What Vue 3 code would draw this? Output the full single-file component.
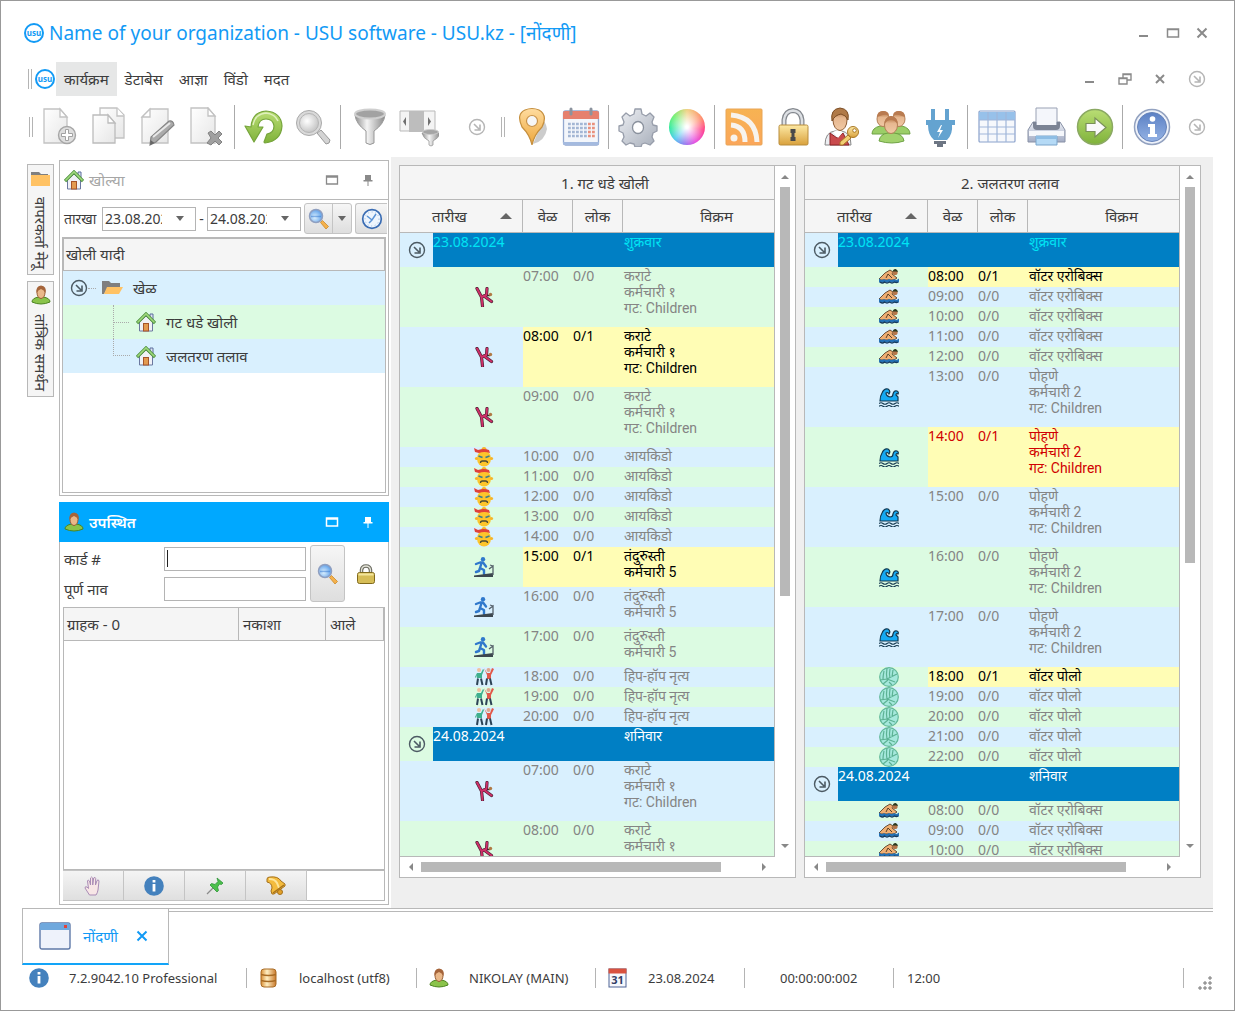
<template>
  <div class="window">
    <svg class="sprite" width="0" height="0" aria-hidden="true">
      <defs>
        <linearGradient id="g-paper" x1="0" y1="0" x2="1" y2="1">
          <stop offset="0" stop-color="#ffffff" />
          <stop offset="1" stop-color="#e6e6e6" />
        </linearGradient>
        <linearGradient id="g-metal" x1="0" y1="0" x2="1" y2="0">
          <stop offset="0" stop-color="#8f8f8f" />
          <stop offset="0.4" stop-color="#f4f4f4" />
          <stop offset="1" stop-color="#8a8a8a" />
        </linearGradient>
        <linearGradient id="g-green" x1="0" y1="0" x2="0" y2="1">
          <stop offset="0" stop-color="#b9dd74" />
          <stop offset="1" stop-color="#7fb23a" />
        </linearGradient>
        <linearGradient id="g-orange" x1="0" y1="0" x2="0" y2="1">
          <stop offset="0" stop-color="#ffdca0" />
          <stop offset="1" stop-color="#eda63a" />
        </linearGradient>
        <linearGradient id="g-gear" x1="0" y1="0" x2="1" y2="1">
          <stop offset="0" stop-color="#eef0f4" />
          <stop offset="1" stop-color="#a6adb9" />
        </linearGradient>
        <linearGradient id="g-rss" x1="0" y1="0" x2="0" y2="1">
          <stop offset="0" stop-color="#f7b352" />
          <stop offset="1" stop-color="#fba65a" />
        </linearGradient>
        <linearGradient id="g-gold" x1="0" y1="0" x2="0" y2="1">
          <stop offset="0" stop-color="#fde9a4" />
          <stop offset="1" stop-color="#d9a13c" />
        </linearGradient>
        <linearGradient id="g-skin" x1="0" y1="0" x2="0" y2="1">
          <stop offset="0" stop-color="#a5622f" />
          <stop offset="0.4" stop-color="#e6b78f" />
          <stop offset="1" stop-color="#f1c9a5" />
        </linearGradient>
        <linearGradient id="g-info" x1="0" y1="0" x2="0" y2="1">
          <stop offset="0" stop-color="#5b80c4" />
          <stop offset="1" stop-color="#94b2e4" />
        </linearGradient>
        <linearGradient id="g-print" x1="0" y1="0" x2="0" y2="1">
          <stop offset="0" stop-color="#eceff6" />
          <stop offset="1" stop-color="#a3acc4" />
        </linearGradient>
        <linearGradient id="g-db" x1="0" y1="0" x2="1" y2="0">
          <stop offset="0" stop-color="#d98e35" />
          <stop offset="0.4" stop-color="#fff0c4" />
          <stop offset="1" stop-color="#c9782a" />
        </linearGradient>
        <radialGradient id="g-lens" cx="0.4" cy="0.6" r="0.7">
          <stop offset="0" stop-color="#e0f3ff" />
          <stop offset="1" stop-color="#4a93e6" />
        </radialGradient>
        <radialGradient id="g-glass" cx="0.4" cy="0.4" r="0.7">
          <stop offset="0" stop-color="#ffffff" />
          <stop offset="1" stop-color="#bdbdbd" />
        </radialGradient>
      </defs>

      <symbol id="i-chevron" viewBox="0 0 18 18">
        <circle cx="9" cy="9" r="7.500" fill="none" stroke="currentColor" stroke-width="1.400" />
        <path d="M6 6l5 5M12 6.500v5.500h-5.500" fill="none" stroke="currentColor" stroke-width="1.600" />
      </symbol>

      <!-- main toolbar -->
      <symbol id="i-new" viewBox="0 0 40 40">
        <path d="M4 2h16l7 8v26H4z" fill="url(#g-paper)" stroke="#c2c2c2" stroke-width="1.300" />
        <path d="M20 2v8h7z" fill="#fff" stroke="#c2c2c2" stroke-width="1.300" />
        <circle cx="27" cy="28" r="8.500" fill="#dedede" stroke="#a6a6a6" stroke-width="1.400" />
        <path d="M25.500 22.500h3v4h4v3h-4v4h-3v-4h-4v-3h4z" fill="#fff" stroke="#a2a2a2" />
      </symbol>
      <symbol id="i-copy" viewBox="0 0 40 40">
        <path d="M11 1h17l7 7v23H11z" fill="url(#g-paper)" stroke="#c2c2c2" stroke-width="1.300" />
        <path d="M28 1v8h7" fill="#fff" stroke="#c2c2c2" stroke-width="1.300" />
        <path d="M4 8h15l7 8v20H4z" fill="url(#g-paper)" stroke="#bcbcbc" stroke-width="1.300" />
        <path d="M19 8v8h7z" fill="#fff" stroke="#bcbcbc" stroke-width="1.300" />
      </symbol>
      <symbol id="i-edit" viewBox="0 0 40 40">
        <path d="M12 2h18v34H4V10z" fill="url(#g-paper)" stroke="#c2c2c2" stroke-width="1.300" />
        <path d="M12 2v8H4z" fill="#fff" stroke="#c2c2c2" stroke-width="1.300" />
        <path d="M12 38l1-8L31 14q4-1 5 4L18 35z" fill="#aaa" stroke="#858585" stroke-width="1.200" />
        <path d="M15 30l17-14" stroke="#e8e8e8" stroke-width="2" />
        <path d="M12 38l.5-5 4 3z" fill="#666" />
      </symbol>
      <symbol id="i-delete" viewBox="0 0 40 40">
        <path d="M4 1h17l7 8v27H4z" fill="url(#g-paper)" stroke="#c2c2c2" stroke-width="1.300" />
        <path d="M21 1v8h7z" fill="#fff" stroke="#c2c2c2" stroke-width="1.300" />
        <path d="M21 26l3-2 4 4 4-4 3 3-4 4 4 4-3 3-4-4-4 4-4-2 4-5z" fill="#a0a0a0" stroke="#828282" />
      </symbol>
      <symbol id="i-refresh" viewBox="0 0 40 40">
        <path d="M7 20Q8 5 22 4q15 1 16 15-1 15-17 17l-1-1 3-8q7-1 7-8-1-7-8-7-7 0-8 8h5L10 35 1 19z" fill="url(#g-green)" stroke="#76a53c" stroke-width="1.200" stroke-linejoin="round" />
        <path d="M9 18Q11 7 22 6q9 1 12 8" fill="none" stroke="#dff0bd" stroke-width="1.500" />
      </symbol>
      <symbol id="i-search" viewBox="0 0 40 40">
        <path d="M24 26l4-3 9 10q0 4-4 4z" fill="#d4d4d4" stroke="#999" />
        <circle cx="16" cy="16" r="12.500" fill="#d9d9d9" stroke="#a9a9a9" />
        <circle cx="16" cy="16" r="9.500" fill="url(#g-glass)" stroke="#b5b5b5" />
      </symbol>
      <symbol id="i-filter" viewBox="0 0 40 40">
        <path d="M5 8q1 9 11 16v12q4 3 8 0V24Q34 17 35 8z" fill="url(#g-metal)" stroke="#989898" />
        <ellipse cx="20" cy="7" rx="15" ry="4.500" fill="#a2a2a2" stroke="#cfcfcf" stroke-width="2" />
      </symbol>
      <symbol id="i-filtercols" viewBox="0 0 40 40">
        <path d="M1 4h35v20H1z" fill="#f4f4f4" stroke="#b9b9b9" />
        <path d="M10 4h15v21H10z" fill="#bdbdbd" />
        <path d="M7 10v9l-3-4.500zM29 10v9l3-4.500z" fill="#707070" />
        <path d="M23 26q1 5 7 8v4q2 2 4 0v-4q6-3 7-8z" fill="url(#g-metal)" stroke="#999" stroke-width="0.800" />
        <ellipse cx="31.500" cy="25" rx="8" ry="2.500" fill="#a5a5a5" stroke="#ccc" />
      </symbol>
      <symbol id="i-pin" viewBox="0 0 40 40">
        <path d="M21 37q12-3 14-15-1-6-4-9z" fill="#000" opacity="0.200" />
        <path d="M20 38Q18 28 10 20 4 7 13 3q7-3 14 0 9 5 3 17-8 8-10 18z" fill="url(#g-orange)" stroke="#c58f3e" stroke-width="1.200" />
        <circle cx="20" cy="14" r="5.500" fill="#f6f6f6" stroke="#c8924a" stroke-width="1.200" />
      </symbol>
      <symbol id="i-calendar" viewBox="0 0 40 40">
        <rect x="2.500" y="4" width="35" height="34" rx="2" fill="#f3f6fb" stroke="#93a8cf" stroke-width="1.300" />
        <path d="M2 6q0-2 2-2h32q2 0 2 2v6H2z" fill="#e6806e" />
        <path d="M2 35h36v2q0 1-2 1H4q-2 0-2-1z" fill="#a4badf" />
        <path d="M10 2v5M30 2v5" stroke="#8b939e" stroke-width="3" stroke-linecap="round" />
        <path d="M7 17h19M7 21h19M7 25h19M7 29h19" stroke="#a3b6d4" stroke-width="2.600" stroke-dasharray="2.800 1.200" />
        <path d="M27 17h7M27 21h7M27 25h7M27 29h7" stroke="#e9917e" stroke-width="2.600" stroke-dasharray="2.800 1.200" />
      </symbol>
      <symbol id="i-gear" viewBox="0 0 40 40">
        <path d="M17 2h6l1 5 4 2 4-3 4 4-2 5 1 3 4 1v5l-4 2-1 4 2 4-4 4-5-2-3 1-1 3h-6l-1-3-4-1-4 2-4-4 2-4-1-4-4-2v-5l4-1 1-3-2-5 4-4 4 3 4-2z" fill="url(#g-gear)" stroke="#979daa" stroke-width="1.300" stroke-linejoin="round" />
        <ellipse cx="20" cy="20.500" rx="5.500" ry="6" fill="#fff" stroke="#8a919d" stroke-width="1.300" />
      </symbol>
      <symbol id="i-rss" viewBox="0 0 40 40">
        <rect x="2" y="2" width="36" height="36" rx="1" fill="url(#g-rss)" stroke="#e9a556" />
        <path d="M7 18q14 1 14 17M7 8q25 2 26 27" fill="none" stroke="#f7f3ee" stroke-width="5" />
        <circle cx="10" cy="31" r="3.500" fill="#f7f3ee" />
      </symbol>
      <symbol id="i-lock" viewBox="0 0 40 40">
        <path d="M11 20v-7q1-9 9-9.500 8 .5 9 9.500v7" fill="none" stroke="#85898f" stroke-width="5" />
        <path d="M11 20v-7q1-9 9-9.500 8 .5 9 9.500v7" fill="none" stroke="#dde0e4" stroke-width="2.500" />
        <rect x="6" y="18" width="29" height="20" rx="1.500" fill="url(#g-gold)" stroke="#b98d3d" />
        <path d="M17.500 22h5v4h-1v4h1v4h-5v-4h1v-4h-1z" fill="#4a4a4a" />
      </symbol>
      <symbol id="i-userkey" viewBox="0 0 40 40">
        <path d="M3 38q0-13 10-14h6q10 1 10 14z" fill="#eceef2" stroke="#888" />
        <path d="M8 38V26l7 5 6-5 6 12z" fill="#c94a4d" stroke="#8d2226" />
        <path d="M11 25l5 6 5-6-5-2z" fill="#fff" />
        <ellipse cx="18" cy="13" rx="7" ry="10.500" fill="url(#g-skin)" stroke="#8d5b33" />
        <path d="M10 14Q8 2 18 1q10 1 8 12-2-5-7-6-6 1-9 7z" fill="#b07a48" stroke="#7c4d24" />
        <circle cx="31" cy="25" r="5.500" fill="url(#g-gold)" stroke="#a97825" />
        <circle cx="32.500" cy="23.500" r="1.800" fill="#fff" stroke="#a97825" />
        <path d="M26 28l3 3-8 7h-3v-3z" fill="#f2cf73" stroke="#a97825" />
      </symbol>
      <symbol id="i-group" viewBox="0 0 40 40">
        <path d="M1 27q0-6 8-8h5l5 8zM39 27q0-6-8-8h-5l-5 8z" fill="#9bce68" stroke="#6ea244" />
        <ellipse cx="12" cy="12" rx="6" ry="7.500" fill="url(#g-skin)" stroke="#b37f56" />
        <ellipse cx="28" cy="12" rx="6" ry="7.500" fill="url(#g-skin)" stroke="#b37f56" />
        <path d="M6 10q0-6 6-6t6 5q-3-2-6-1t-6 2zM22 9q0-5 6-5t6 6q-3-1-6-2t-6 1z" fill="#b97b50" />
        <path d="M8 34q1-7 9-8h6q9 1 10 8-12 4-25 0z" fill="#a2d26d" stroke="#6ea244" />
        <ellipse cx="20" cy="18" rx="6.500" ry="8.500" fill="url(#g-skin)" stroke="#b37f56" />
        <path d="M13.500 17q0-7 6.500-8 7 1 6.500 8-3-4-6.500-4-4 0-6.500 4z" fill="#b97b50" />
      </symbol>
      <symbol id="i-plug" viewBox="0 0 40 40">
        <path d="M11 2h4v11h-4zM25 2h4v11h-4zM6 13h29v5h-3q1 9-5 15H14Q8 28 8 18H6z" fill="#64a3d0" />
        <path d="M14 34h12v3h-3v3h-6v-3h-3z" fill="#6d7683" />
        <path d="M21 18l-4 7h3l-2 6 5-8h-3l2-5z" fill="#fff" />
      </symbol>
      <symbol id="i-table" viewBox="0 0 40 40">
        <rect x="2" y="4" width="36" height="31" rx="1" fill="#f6f8fc" stroke="#8aa1cb" stroke-width="1.200" />
        <path d="M2 5h36v8H2z" fill="#97c1ea" />
        <path d="M2 13h36M2 20h36M2 27h36M11 5v30M20 5v30M29 5v30" stroke="#a0b6d9" stroke-width="1.200" />
      </symbol>
      <symbol id="i-printer" viewBox="0 0 40 40">
        <path d="M10 1h21v19H10z" fill="#f4f6fb" stroke="#99a1b4" />
        <path d="M2 23l5-8h3v4h21v-4h3l5 8v12H2z" fill="url(#g-print)" stroke="#8790a5" />
        <path d="M7 15h3v3h21v-3h3v4q0 4-4 4H11q-4 0-4-4z" fill="#7b8394" />
        <path d="M3 24h35v5H3z" fill="#f5f7fb" />
        <path d="M10 29h21v9H10z" fill="#b5daf6" stroke="#7aa5cb" />
        <path d="M10 29h21v3H10z" fill="#8ebde4" />
      </symbol>
      <symbol id="i-next" viewBox="0 0 40 40">
        <circle cx="20" cy="20" r="17.500" fill="url(#g-green)" stroke="#8ba963" stroke-width="1.500" />
        <path d="M11 16.500h9V11l11 9.500L20 30v-5.500h-9z" fill="#fafafa" stroke="#7a9058" stroke-width="1.200" />
      </symbol>
      <symbol id="i-about" viewBox="0 0 40 40">
        <circle cx="20" cy="20" r="17.500" fill="#eef2fa" stroke="#93a2c0" stroke-width="1.500" />
        <circle cx="20" cy="20" r="14.500" fill="url(#g-info)" stroke="#6683b9" />
        <circle cx="20.500" cy="12" r="2.800" fill="#fff" />
        <path d="M16 17h7v10h2v3h-9v-3h2v-7h-2z" fill="#fff" />
      </symbol>

      <!-- small icons -->
      <symbol id="i-home" viewBox="0 0 20 20">
        <path d="M14 2h3v6h-3z" fill="#dfe5f2" stroke="#5b6d9c" />
        <path d="M3.500 9.500L10 4l6.500 5.500V19h-13z" fill="#f0f1f6" stroke="#6b789f" />
        <rect x="7.500" y="11.500" width="5" height="7.500" fill="#e39a50" stroke="#a4532a" />
        <path d="M1 11l9-9 9 9" fill="none" stroke="#4b8f3c" stroke-width="3.200" />
        <path d="M1.500 10.500L10 2l8.500 8.500" fill="none" stroke="#a0d97c" stroke-width="1.600" />
      </symbol>
      <symbol id="i-folder" viewBox="0 0 20 16">
        <path d="M0 2h8l2 2h7v4H0z" fill="#7f7f7f" />
        <path d="M0 5h19v11H0z" fill="#ffc264" />
      </symbol>
      <symbol id="i-openfolder" viewBox="0 0 22 16">
        <path d="M0 1h7l2 2h9v4H6L2 14H0z" fill="#7f7f7f" />
        <path d="M5 7h16l-4 7H2z" fill="#ffc264" />
      </symbol>
      <symbol id="i-person" viewBox="0 0 20 20">
        <path d="M1 17q0-4 7-5h4q7 1 7 5-9 4-18 0z" fill="#8ac34a" stroke="#4c8420" />
        <ellipse cx="10" cy="7.500" rx="4" ry="6" fill="#eab889" stroke="#9a5e32" />
        <path d="M5.500 8q-1-7 4.500-7.500 6 .5 4.500 7.500-1.500-3-4.500-4-3 1-4.500 4z" fill="#a5643a" />
      </symbol>
      <symbol id="i-find" viewBox="0 0 22 22">
        <path d="M12.500 14.500l2-2 6 6-2.500 2.500z" fill="#f5b14c" stroke="#c98a2b" stroke-width="0.800" />
        <circle cx="8" cy="8" r="6.500" fill="url(#g-lens)" stroke="#8f9fc0" stroke-width="1.500" />
        <path d="M3 8.500h10" stroke="#2f74d0" stroke-width="1.500" opacity="0.500" />
      </symbol>
      <symbol id="i-clock" viewBox="0 0 22 22">
        <circle cx="11" cy="11" r="9.300" fill="#eef5fd" stroke="#3a6cb3" stroke-width="1.700" />
        <circle cx="11" cy="11" r="7" fill="none" stroke="#9ab9e0" stroke-dasharray="1 2.600" />
        <path d="M6 8l5 4 4-6M11 12l-3 3" fill="none" stroke="#5b93d6" stroke-width="1.500" />
      </symbol>
      <symbol id="i-padlock" viewBox="0 0 20 20">
        <path d="M5.500 9V6q.5-4 4.500-4t4.500 4v3" fill="none" stroke="#6b6b60" stroke-width="3.500" />
        <path d="M5.500 9V6q.5-4 4.500-4t4.500 4v3" fill="none" stroke="#e2e2d8" stroke-width="1.300" />
        <rect x="1.500" y="8.500" width="17" height="11" rx="2" fill="#d6bd57" stroke="#80691c" />
        <path d="M2.500 10.500h15" stroke="#f3e59c" stroke-width="2" />
      </symbol>
      <symbol id="i-hand" viewBox="0 0 20 20">
        <path d="M6.500 19L2 12q0-2 2-1l1.500 1.500L4.500 5q.5-2 2 0l1 4V2q1-2 2.200 0V9l1-7q1.500-1.500 2 .5L12.500 9 14 4.500q1.500-1.500 2 .5L15 14q-.5 3-2 5z" fill="#f7e6e6" stroke="#a98bb5" />
      </symbol>
      <symbol id="i-info" viewBox="0 0 20 20">
        <circle cx="10" cy="10" r="9.800" fill="#4481bd" />
        <path d="M8.600 4h2.800v2.600H8.600zM8.600 8h2.800v7.500H8.600z" fill="#fff" />
      </symbol>
      <symbol id="i-tack" viewBox="0 0 20 20">
        <path d="M2 18l7-7" stroke="#8b8b8b" stroke-width="1.300" />
        <path d="M12 2l6 5-1.500 1.500-2-.5-2 3 1 3.500L12 16l-7-7 1.500-1.500 3.500 1 3-3z" fill="#4cbf4c" stroke="#2f9638" stroke-width="0.800" />
      </symbol>
      <symbol id="i-bell" viewBox="0 0 20 20">
        <path d="M1 3q0-2 3-2 8-1 11 4l4 3v2L8 18H6q-2-3 0-6 0-5-5-6z" fill="#f3bb3d" stroke="#a5711c" />
        <path d="M3 3q6 0 8 4l2 5" fill="none" stroke="#fde59a" stroke-width="2" />
        <path d="M18 9L7 17" stroke="#a5711c" stroke-width="1.500" />
        <circle cx="14" cy="16" r="2.500" fill="#e3a12a" stroke="#a5711c" />
      </symbol>
      <symbol id="i-window" viewBox="0 0 32 28">
        <rect x="1" y="1" width="30" height="26" rx="2" fill="#eef2fb" stroke="#5f79a8" stroke-width="1.400" />
        <path d="M1 3q0-2 2-2h26q2 0 2 2v5H1z" fill="#6fa8dd" />
        <rect x="25" y="3" width="3" height="3" fill="#e0443c" />
      </symbol>
      <symbol id="i-db" viewBox="0 0 20 20">
        <rect x="2" y="1" width="15" height="18" rx="3" fill="url(#g-db)" stroke="#a86b24" />
        <path d="M2 6.500q7.500 2 15 0M2 12.500q7.500 2 15 0" fill="none" stroke="#a86b24" stroke-width="1.300" />
      </symbol>

      <!-- lesson icons -->
      <symbol id="i-karate" viewBox="0 0 20 20">
        <path d="M3 1.500L7.500 10 8.500 19M7.500 10l5-2 .5-6.500M10 9l7.500 5.500" fill="none" stroke="#4a2233" stroke-width="3.200" stroke-linecap="round" stroke-linejoin="round" />
        <path d="M3 1.500L7.500 10 8.500 19M7.500 10l5-2 .5-6.500M10 9l7.500 5.500" fill="none" stroke="#cf2f68" stroke-width="1.900" stroke-linecap="round" stroke-linejoin="round" />
        <path d="M13 8.500h3" stroke="#4a2233" stroke-width="1.500" />
        <circle cx="16.500" cy="7.500" r="1.700" fill="#b07a45" />
      </symbol>
      <symbol id="i-aikido" viewBox="0 0 20 20">
        <circle cx="10" cy="2.500" r="2.500" fill="#f5b62a" />
        <ellipse cx="10" cy="11.500" rx="7" ry="8" fill="#fdc52c" />
        <circle cx="2.500" cy="11.500" r="1.600" fill="#f5b62a" />
        <circle cx="17.500" cy="11.500" r="1.600" fill="#f5b62a" />
        <path d="M4 3q6-2 11 0l1 3Q10 4 5 6L1 5 0 1z" fill="#e0413a" />
        <path d="M4.500 9l4 1.500M15.500 9l-4 1.500" fill="none" stroke="#3d7f88" stroke-width="1.800" />
        <path d="M6.500 16q0-2 2-2h3q2 0 2 2" fill="none" stroke="#4b4a35" stroke-width="1.300" />
      </symbol>
      <symbol id="i-fitness" viewBox="0 0 20 20">
        <circle cx="9" cy="2.200" r="2.200" fill="#2f78cc" />
        <path d="M2 7l4-1.500h3l3 4M7.500 6L6 11l4 2v4M6 11l-1 3-3 1" fill="none" stroke="#2f78cc" stroke-width="2.400" stroke-linecap="round" stroke-linejoin="round" />
        <path d="M0 18.500l19-2.500v4H0z" fill="#3d474f" />
        <path d="M19 18V9l-4 3M19 9l-3-1" fill="none" stroke="#55606a" stroke-width="1.300" />
      </symbol>
      <symbol id="i-dance" viewBox="0 0 20 20">
        <circle cx="5" cy="3" r="2" fill="#f0c0a0" />
        <circle cx="14.500" cy="3" r="2" fill="#e0a890" />
        <path d="M1 10l2-4h4l2-4 1 1-2 5v3H3V8l-1 3z" fill="#3fb08e" />
        <path d="M10 1l3 5h3l2-5 2 1-3 6v4h-4V8z" fill="#e2584a" />
        <path d="M4 11.500L3 18M7 11.500L8.500 18M13 11.500L12 18M16 11.500L17.500 18" stroke="#2c4356" stroke-width="2" />
      </symbol>
      <symbol id="i-swim" viewBox="0 0 20 20">
        <path d="M0 12l6-6 5-3 3 2-1 2 5 4-3 2H2z" fill="#efae72" stroke="#5b4027" stroke-width="0.900" />
        <path d="M9 7l-2 4M9 7l4 4" fill="none" stroke="#5b4027" />
        <circle cx="16" cy="5.500" r="2.600" fill="#b5774a" />
        <path d="M13.500 4.500q1-3 3-2.500t2.500 3l-2-.5z" fill="#2b3a20" />
        <path d="M0 11.500q2.500 2.500 5 .5 2.500 2 5 0 2.500 2 5 0 2.500 2 5-.5v4H0z" fill="#2471b5" />
        <path d="M1 15q2.500 2 4.500 0 2.500 2 5 0 2.500 2 5 0 2 1 3.500 0" fill="none" stroke="#173a5c" stroke-width="1.300" />
      </symbol>
      <symbol id="i-wave" viewBox="0 0 20 20">
        <path d="M1 14q0-5 2-8 2-5 6-4 3 2 1 5-1-2-3-1 0 3 4 4 3 0 3-3 1-4 4-3 2 1 1 3-2-1-2 1l2 2v4z" fill="#15a9f2" stroke="#12384f" stroke-width="1.200" />
        <path d="M0 16.500q2-1.500 4 0t4 0 4 0 4 0 4 0M0 19.200q2-1.500 4 0t4 0 4 0 4 0 4 0" fill="none" stroke="#12384f" stroke-width="1.100" />
      </symbol>
      <symbol id="i-ball" viewBox="0 0 20 20">
        <circle cx="10" cy="10" r="9.300" fill="#a5e8dc" stroke="#62b899" stroke-width="1.200" />
        <path d="M8 1q-1 6 0 11M11 2q-1 5 0 9M1 13l7-1 10-5M5 4q-1 5-1 8M8 12l8 3M9 13l-5 4M14 3l-1 7M10 15l3 3" fill="none" stroke="#5bb193" stroke-width="1.200" />
      </symbol>
    </svg>

    <header class="titlebar">
      <svg class="logo" viewBox="0 0 22 22">
        <circle cx="11" cy="11" r="9" fill="#fff" stroke="#129af5" stroke-width="2" />
        <text x="11" y="14" text-anchor="middle">usu</text>
      </svg>
      <h1>Name of your organization - USU software - USU.kz - [नोंदणी]</h1>
      <div class="sysbuttons">
        <button type="button" aria-label="Minimize"><svg viewBox="0 0 14 14"><path d="M2 10h9" stroke="currentColor" stroke-width="2" /></svg></button>
        <button type="button" aria-label="Maximize"><svg viewBox="0 0 14 14"><path d="M1.500 3h11v8h-11z M1 3.500h12" fill="none" stroke="currentColor" stroke-width="1.500" /></svg></button>
        <button type="button" aria-label="Close"><svg viewBox="0 0 14 14"><path d="M2.500 2.500l9 9M11.500 2.500l-9 9" stroke="currentColor" stroke-width="2" /></svg></button>
      </div>
    </header>

    <nav class="menubar">
      <span class="grip"></span>
      <svg class="logo" viewBox="0 0 22 22">
        <circle cx="11" cy="11" r="9" fill="#fff" stroke="#129af5" stroke-width="2" />
        <text x="11" y="14" text-anchor="middle">usu</text>
      </svg>
      <button v-for="(item, i) in menu" :key="item" type="button" class="menu-item" :class="{ active: i === 0 }">{{ item }}</button>
      <div class="mdi">
        <button type="button" aria-label="Minimize child"><svg viewBox="0 0 14 14"><path d="M2 10h9" stroke="currentColor" stroke-width="2" /></svg></button>
        <button type="button" aria-label="Restore child"><svg viewBox="0 0 14 14"><path d="M1 6h8v6H1zM5 6V2h8v6H9M1 6.500h8M5 2.500h8" fill="none" stroke="currentColor" stroke-width="1.400" /></svg></button>
        <button type="button" aria-label="Close child"><svg viewBox="0 0 14 14"><path d="M3 3l8 8M11 3l-8 8" stroke="currentColor" stroke-width="2" /></svg></button>
        <button type="button" class="more" aria-label="More"><svg><use href="#i-chevron" /></svg></button>
      </div>
    </nav>

    <div class="toolbar">
      <span class="grip"></span>
      <template v-for="(tool, i) in leftTools" :key="'l' + i">
        <span v-if="tool === '|'" class="sep"></span>
        <button v-else type="button" class="tool" :aria-label="tool"><svg><use :href="'#i-' + tool" /></svg></button>
      </template>
      <button type="button" class="more inner" aria-label="More"><svg><use href="#i-chevron" /></svg></button>
      <span class="grip"></span>
      <template v-for="(tool, i) in rightTools" :key="'r' + i">
        <span v-if="tool === '|'" class="sep"></span>
        <button v-else-if="tool === 'colors'" type="button" class="tool" aria-label="colors"><span class="wheel"></span></button>
        <button v-else type="button" class="tool" :aria-label="tool"><svg><use :href="'#i-' + tool" /></svg></button>
      </template>
      <button type="button" class="more last" aria-label="More"><svg><use href="#i-chevron" /></svg></button>
    </div>

    <main class="workspace">
      <div class="side-tabs">
        <button type="button" class="side-tab"><svg><use href="#i-folder" /></svg><span>वापरकर्ता मेनू</span></button>
        <button type="button" class="side-tab"><svg><use href="#i-person" /></svg><span>तांत्रिक समर्थन</span></button>
      </div>

      <div class="dock">
        <section class="panel rooms">
          <div class="panel-title">
            <svg class="small"><use href="#i-home" /></svg>
            <h2>खोल्या</h2>
            <button type="button" aria-label="Maximize panel"><svg viewBox="0 0 14 14"><path d="M1.500 3h11v8h-11z M1 4h12" fill="none" stroke="currentColor" stroke-width="1.300" /></svg></button>
            <button type="button" aria-label="Pin panel"><svg viewBox="0 0 14 14"><path d="M4 2h6v5h1.500v1.500h-9V7H4zM6.500 8.500h1V13h-1z" fill="currentColor" /></svg></button>
          </div>
          <div class="dates">
            <label for="from" class="range">तारखा</label>
            <span class="combo"><input id="from" v-model="dateFrom" type="text"><i class="caret"></i></span>
            <label for="to">-</label>
            <span class="combo"><input id="to" v-model="dateTo" type="text"><i class="caret"></i></span>
            <div class="split">
              <button type="button" aria-label="Search"><svg><use href="#i-find" /></svg></button>
              <button type="button" class="drop" aria-label="Search options"><i class="caret"></i></button>
            </div>
            <button type="button" class="clock" aria-label="Now"><svg><use href="#i-clock" /></svg></button>
          </div>
          <div class="tree">
            <div class="tree-head">खोली यादी</div>
            <ul>
              <li class="root">
                <svg class="expander"><use href="#i-chevron" /></svg>
                <i class="dash"></i>
                <svg class="folder"><use href="#i-openfolder" /></svg>
                <span>खेळ</span>
              </li>
              <li v-for="room in rooms" :key="room" class="leaf">
                <i class="branch"></i>
                <svg class="small"><use href="#i-home" /></svg>
                <span>{{ room }}</span>
              </li>
            </ul>
          </div>
        </section>

        <section class="panel present">
          <div class="panel-title active">
            <svg class="small"><use href="#i-person" /></svg>
            <h2>उपस्थित</h2>
            <button type="button" aria-label="Maximize panel"><svg viewBox="0 0 14 14"><path d="M1.500 3h11v8h-11z M1 4h12" fill="none" stroke="currentColor" stroke-width="1.500" /></svg></button>
            <button type="button" aria-label="Pin panel"><svg viewBox="0 0 14 14"><path d="M4 2h6v5h1.500v1.500h-9V7H4zM6.500 8.500h1V13h-1z" fill="currentColor" /></svg></button>
          </div>
          <div class="lookup">
            <div class="fields">
              <label for="card">कार्ड #</label>
              <span class="field focused"><input id="card" v-model="card" type="text"></span>
              <label for="fullname">पूर्ण नाव</label>
              <span class="field"><input id="fullname" v-model="fullName" type="text"></span>
            </div>
            <button type="button" class="find" aria-label="Find"><svg><use href="#i-find" /></svg></button>
            <svg class="small"><use href="#i-padlock" /></svg>
          </div>
          <div class="visitors">
            <table>
              <thead>
                <tr><th>ग्राहक - 0</th><th>नकाशा</th><th>आले</th></tr>
              </thead>
            </table>
          </div>
          <div class="actions">
            <button v-for="a in actions" :key="a" type="button" :aria-label="a"><svg><use :href="'#i-' + a" /></svg></button>
            <span></span>
          </div>
        </section>
      </div>

      <div class="documents">
        <section v-for="s in schedules" :key="s.title" class="schedule">
          <div class="viewport">
            <table>
              <colgroup><col class="c-indent"><col class="c-date"><col class="c-time"><col class="c-people"><col class="c-record"></colgroup>
              <thead>
                <tr><th colspan="5" class="band">{{ s.title }}</th></tr>
                <tr>
                  <th colspan="2" class="sorted"><div>तारीख<i></i></div></th>
                  <th>वेळ</th>
                  <th>लोक</th>
                  <th>विक्रम</th>
                </tr>
              </thead>
              <tbody>
                <template v-for="(row, i) in s.rows" :key="i">
                  <tr v-if="row.date" class="day" :class="{ today: row.today }">
                    <td class="toggle"><svg><use href="#i-chevron" /></svg></td>
                    <td colspan="3" class="fill">{{ row.date }}</td>
                    <td class="fill record">{{ row.name }}</td>
                  </tr>
                  <tr v-else :class="['lines' + row.lines, row.state]">
                    <td colspan="2" class="kind"><svg><use :href="'#i-' + row.icon" /></svg></td>
                    <td>{{ row.time }}</td>
                    <td>{{ row.people }}</td>
                    <td class="record">{{ row.name }}</td>
                  </tr>
                </template>
              </tbody>
            </table>
          </div>
          <div class="vscroll"><i class="up"></i><div class="track"><div class="thumb" :style="{ height: s.thumb + '%' }"></div></div><i class="down"></i></div>
          <div class="hscroll"><i class="prev"></i><div class="track"><div class="thumb"></div></div><i class="next"></i></div>
        </section>
      </div>
    </main>

    <div class="tabstrip">
      <div class="tab">
        <svg><use href="#i-window" /></svg>
        <a href="#">नोंदणी</a>
        <button type="button" aria-label="Close tab"><svg viewBox="0 0 12 12"><path d="M1.500 1.500l9 9M10.500 1.500l-9 9" stroke="currentColor" stroke-width="2" /></svg></button>
      </div>
    </div>

    <footer class="statusbar">
      <div class="cell version"><svg><use href="#i-info" /></svg><span>7.2.9042.10 Professional</span></div>
      <div class="cell host"><svg><use href="#i-db" /></svg><span>localhost (utf8)</span></div>
      <div class="cell user"><svg><use href="#i-person" /></svg><span>NIKOLAY (MAIN)</span></div>
      <div class="cell date">
        <svg viewBox="0 0 20 20">
          <rect x="1" y="1" width="17" height="18" fill="#f7f8fc" stroke="#4e6496" />
          <path d="M.5.500h18v5H.500z" fill="#d9523f" />
          <text x="9.500" y="16" text-anchor="middle">31</text>
        </svg>
        <span>23.08.2024</span>
      </div>
      <div class="cell timer"><span>00:00:00:002</span></div>
      <div class="cell time"><span>12:00</span></div>
      <svg class="resize" viewBox="0 0 14 14"><path d="M12 0v4M10 2h4M7 5v4M5 7h4M12 5v4M10 7h4M2 10v4M0 12h4M7 10v4M5 12h4M12 10v4M10 12h4" stroke="#777" /></svg>
    </footer>
  </div>
</template>

<script setup>
import { ref } from 'vue'

const dateFrom = ref('23.08.2024')
const dateTo = ref('24.08.2024')
const card = ref('')
const fullName = ref('')

const menu = ['कार्यक्रम', 'डेटाबेस', 'आज्ञा', 'विंडो', 'मदत']
const leftTools = ['new', 'copy', 'edit', 'delete', '|', 'refresh', 'search', '|', 'filter', 'filtercols']
const rightTools = ['pin', 'calendar', '|', 'gear', 'colors', '|', 'rss', 'lock', 'userkey', 'group', 'plug', '|', 'table', 'printer', 'next', '|', 'about']
const rooms = ['गट धडे खोली', 'जलतरण तलाव']
const actions = ['hand', 'info', 'tack', 'bell']

const day = (date, name, today = false) => ({ date, name, today })

const lesson = (icon, time, name, lines = 1, state = '') => ({
  icon,
  time,
  name,
  lines,
  state,
  people: state ? '0/1' : '0/0',
})

const karate = 'कराटे\nकर्मचारी १\nगट: Children'
const fitness = 'तंदुरुस्ती\nकर्मचारी 5'
const swimming = 'पोहणे\nकर्मचारी 2\nगट: Children'

const schedules = [
  {
    title: '1. गट धडे खोली',
    thumb: 63,
    rows: [
      day('23.08.2024', 'शुक्रवार', true),
      lesson('karate', '07:00', karate, 3),
      lesson('karate', '08:00', karate, 3, 'booked'),
      lesson('karate', '09:00', karate, 3),
      ...['10:00', '11:00', '12:00', '13:00', '14:00'].map((t) => lesson('aikido', t, 'आयकिडो')),
      lesson('fitness', '15:00', fitness, 2, 'booked'),
      lesson('fitness', '16:00', fitness, 2),
      lesson('fitness', '17:00', fitness, 2),
      ...['18:00', '19:00', '20:00'].map((t) => lesson('dance', t, 'हिप-हॉप नृत्य')),
      day('24.08.2024', 'शनिवार'),
      lesson('karate', '07:00', karate, 3),
      lesson('karate', '08:00', karate, 3),
    ],
  },
  {
    title: '2. जलतरण तलाव',
    thumb: 58,
    rows: [
      day('23.08.2024', 'शुक्रवार', true),
      lesson('swim', '08:00', 'वॉटर एरोबिक्स', 1, 'booked'),
      ...['09:00', '10:00', '11:00', '12:00'].map((t) => lesson('swim', t, 'वॉटर एरोबिक्स')),
      lesson('wave', '13:00', swimming, 3),
      lesson('wave', '14:00', swimming, 3, 'booked debt'),
      ...['15:00', '16:00', '17:00'].map((t) => lesson('wave', t, swimming, 3)),
      lesson('ball', '18:00', 'वॉटर पोलो', 1, 'booked'),
      ...['19:00', '20:00', '21:00', '22:00'].map((t) => lesson('ball', t, 'वॉटर पोलो')),
      day('24.08.2024', 'शनिवार'),
      ...['08:00', '09:00', '10:00'].map((t) => lesson('swim', t, 'वॉटर एरोबिक्स')),
    ],
  },
]
</script>

<style>
body {
  margin: 0;
}
</style>

<style scoped>
* {
  box-sizing: border-box;
}

.window {
  display: flex;
  flex-direction: column;
  height: 100vh;
  overflow: hidden;
  border: 1px solid #999;
  background: #fff;
  color: #3c3c3c;
  font: 13px/16px "Noto Sans", "Open Sans", sans-serif;
}

.sprite {
  position: absolute;
}

svg {
  display: block;
  flex: none;
}

button {
  display: flex;
  align-items: center;
  justify-content: center;
  flex: none;
  margin: 0;
  padding: 0;
  border: 0;
  background: none;
  color: inherit;
  font: inherit;
}

h1, h2 {
  margin: 0;
  font-weight: 400;
}

.logo {
  width: 22px;
  height: 22px;
}

.logo text {
  fill: #129af5;
  font-size: 8px;
  font-weight: 700;
}

/* title and menu */
.titlebar {
  display: flex;
  align-items: center;
  height: 61px;
  padding: 2px 18px 0 22px;
}

.titlebar h1 {
  flex: 1;
  margin-left: 4px;
  color: #129af5;
  font-size: 19px;
  line-height: 30px;
  white-space: nowrap;
}

.sysbuttons {
  display: flex;
  gap: 1px;
  color: #8a8a8a;
}

.sysbuttons button {
  width: 28px;
  height: 28px;
}

.sysbuttons svg, .mdi svg {
  width: 14px;
  height: 14px;
}

.menubar {
  display: flex;
  align-items: center;
  height: 34px;
  padding: 0 28px 0 27px;
}

.grip {
  flex: none;
  width: 4px;
  height: 20px;
  margin-right: 2px;
  border: 1px solid #b4b4b4;
  border-width: 0 1px;
}

.menu-item {
  height: 34px;
  padding: 0 8px;
  font-size: 15px;
}

.menu-item.active {
  background: #e6e7e7;
}

.mdi {
  display: flex;
  align-items: center;
  margin-left: auto;
  gap: 21px;
  color: #8a8a8a;
}

.more {
  color: #b5b5b5;
}

.more svg, .mdi .more svg {
  width: 18px;
  height: 18px;
}

/* toolbar */
.toolbar {
  display: flex;
  align-items: center;
  height: 61px;
  padding: 0 25px 0 28px;
}

.tool {
  width: 49px;
  height: 44px;
}

.tool svg {
  width: 40px;
  height: 40px;
}

.wheel {
  width: 36px;
  height: 36px;
  border-radius: 50%;
  background:
    radial-gradient(circle, #fff 5%, rgba(255, 255, 255, 0) 70%),
    conic-gradient(#f0d080, #ff8a6a 60deg, #ff3d88 100deg, #e84de0 150deg, #8f7cf0 190deg, #50c8f0 225deg, #30eaa0 265deg, #70f070 310deg, #f0d080);
}

.sep {
  flex: none;
  width: 8px;
  height: 44px;
  background: linear-gradient(#aaa, #aaa) 3px 0 / 1px 100% no-repeat;
}

.more.inner {
  width: 24px;
  margin: 0 12px 0 22px;
}

.more.last {
  width: 24px;
  margin-left: auto;
}

/* workspace */
.workspace {
  display: flex;
  flex: 1;
  min-height: 0;
  padding: 0 21px 0 26px;
}

.side-tabs {
  display: flex;
  flex-direction: column;
  flex: none;
  gap: 6px;
  width: 32px;
  padding-top: 7px;
}

.side-tab {
  flex-direction: column;
  justify-content: flex-start;
  gap: 9px;
  width: 27px;
  height: 111px;
  padding-top: 3px;
  border: 1px solid #b8b8b8;
  background: #f5f5f5;
  font-size: 15px;
}

.side-tab + .side-tab {
  height: 116px;
}

.side-tab svg {
  width: 20px;
  height: 20px;
}

.side-tab span {
  writing-mode: vertical-rl;
  white-space: nowrap;
}

.dock {
  display: flex;
  flex-direction: column;
  flex: none;
  gap: 6px;
  width: 330px;
  padding: 3px 0;
}

.panel {
  display: flex;
  flex-direction: column;
  border: 1px solid #b8b8b8;
}

.rooms {
  height: 336px;
}

.present {
  flex: 1;
  min-height: 0;
}

.panel-title {
  display: flex;
  align-items: center;
  flex: none;
  height: 39px;
  padding: 0 13px 0 4px;
  border-bottom: 1px solid #b8b8b8;
  color: #8a8a8a;
}

.panel-title h2 {
  flex: 1;
  margin-left: 5px;
  color: #a6a6a6;
  font-size: 15px;
}

.panel-title button {
  width: 14px;
  margin-left: 22px;
}

.panel-title button svg {
  width: 14px;
  height: 14px;
}

.panel-title.active {
  margin: -1px -1px 0;
  padding: 0 14px 0 5px;
  height: 40px;
  border: 0;
  background: #00a8ff;
  color: #fff;
}

.panel-title.active h2 {
  color: #fff;
  font-weight: 600;
}

.small {
  width: 20px;
  height: 20px;
}

.dates {
  display: flex;
  align-items: center;
  height: 37px;
  padding-left: 4px;
}

.dates label {
  width: 11px;
  text-align: center;
  font-size: 14px;
  white-space: nowrap;
}

.dates .range {
  width: 38px;
  text-align: left;
}

.combo {
  display: flex;
  align-items: center;
  width: 94px;
  height: 24px;
  padding: 0 11px 0 2px;
  border: 1px solid #b4b4b4;
}

.combo input {
  flex: 1;
  min-width: 0;
  margin-right: 14px;
  padding: 0;
  border: 0;
  outline: 0;
  background: none;
  color: #3c3c3c;
  font: 14px/20px "Noto Sans", sans-serif;
}

.caret {
  flex: none;
  border: 4px solid transparent;
  border-top: 5px solid #666;
  border-bottom: 0;
}

.split {
  display: flex;
  width: 48px;
  height: 31px;
  margin: 0 3px;
  border: 1px solid #c4c4c4;
  border-radius: 3px;
  background: linear-gradient(#f6f6f6, #dedede);
}

.split button {
  flex: 1;
}

.split .drop {
  flex: none;
  width: 19px;
  border-left: 1px solid #c4c4c4;
}

.split svg, .clock svg, .find svg {
  width: 22px;
  height: 22px;
}

.clock {
  width: 32px;
  height: 31px;
  border: 1px solid #c4c4c4;
  border-right: 0;
  border-radius: 3px 0 0 3px;
  background: linear-gradient(#f6f6f6, #dedede);
}

.tree {
  flex: 1;
  margin: 0 2px 2px;
  border: 1px solid #b8b8b8;
}

.tree-head {
  height: 33px;
  padding-left: 2px;
  border: 1px solid #b8b8b8;
  background: #f5f5f5;
  font-size: 15px;
  line-height: 31px;
}

.tree ul {
  margin: 0;
  padding: 0;
  list-style: none;
}

.tree li {
  display: flex;
  align-items: center;
  height: 34px;
  background: #d9f0fe;
  font-size: 15px;
}

.tree li:nth-child(even) {
  background: #dcfbe2;
}

.root {
  padding-left: 7px;
}

.root span {
  margin-left: 9px;
}

.expander, .toggle svg {
  width: 18px;
  height: 18px;
  color: #4c5a63;
}

.dash {
  width: 8px;
  margin: 0 6px 0 0;
  border-top: 1px dotted #aaa;
}

.folder {
  width: 22px;
  height: 16px;
}

.leaf {
  padding-left: 50px;
}

.leaf .branch {
  align-self: flex-start;
  width: 17px;
  height: 17px;
  margin-right: 6px;
  border: 1px dotted #aaa;
  border-width: 0 0 1px 1px;
}

.leaf:not(:last-child) .branch {
  height: 100%;
  border-bottom: 0;
  background: repeating-linear-gradient(90deg, #aaa 0 1px, transparent 1px 2px) 0 50% / 100% 1px no-repeat;
}

.leaf span {
  margin-left: 10px;
}

.lookup {
  display: flex;
  align-items: center;
  height: 65px;
  padding: 0 12px 2px 4px;
}

.fields {
  display: grid;
  grid-template-columns: 100px 142px;
  row-gap: 6px;
  align-items: center;
  font-size: 15px;
}

.field {
  position: relative;
  height: 24px;
}

.field input {
  display: block;
  width: 100%;
  height: 24px;
  padding: 0 3px;
  border: 1px solid #b4b4b4;
  outline: 0;
  font: 14px/20px "Noto Sans", sans-serif;
}

.field.focused::after {
  position: absolute;
  top: 3px;
  left: 3px;
  width: 1px;
  height: 17px;
  background: #222;
  content: '';
}

.find {
  width: 35px;
  height: 57px;
  margin: 0 11px 0 4px;
  border: 1px solid #c4c4c4;
  border-radius: 3px;
  background: linear-gradient(#f6f6f6, #dedede);
}

.visitors {
  flex: 1;
  min-height: 0;
  margin: 0 3px;
  border: 1px solid #b8b8b8;
}

.visitors table {
  width: 100%;
  border-collapse: separate;
  border-spacing: 0;
  table-layout: fixed;
}

.visitors th {
  height: 33px;
  padding: 0 4px;
  border: 1px solid #b8b8b8;
  border-width: 0 1px 1px 0;
  background: #f5f5f5;
  font-size: 15px;
  font-weight: 400;
  text-align: left;
}

.visitors th:first-child {
  padding-left: 3px;
}

.visitors th:nth-child(2) {
  width: 87px;
}

.visitors th:nth-child(3) {
  width: 58px;
}

.actions {
  display: flex;
  flex: none;
  height: 31px;
  margin: 0 3px 3px;
}

.actions button {
  width: 61px;
  border: 1px solid #c4c4c4;
  border-left: 0;
  background: linear-gradient(#f4f4f4, #dfdfdf);
}

.actions span {
  flex: 1;
  border: 1px solid #b8b8b8;
  border-left: 0;
}

.actions svg {
  width: 20px;
  height: 20px;
}

/* schedules */
.documents {
  display: flex;
  flex: 1;
  gap: 8px;
  min-width: 0;
  margin-left: 2px;
  padding: 8px 12px 30px 8px;
  background: #efefef;
}

.schedule {
  display: grid;
  flex: 1;
  grid-template-columns: 1fr 20px;
  grid-template-rows: 1fr 20px;
  min-width: 0;
  border: 1px solid #b8b8b8;
  background: #fff;
}

.viewport {
  min-height: 0;
  overflow: hidden;
  border-right: 1px solid #b8b8b8;
  border-bottom: 1px solid #b8b8b8;
}

.viewport table {
  width: 100%;
  min-width: 411px;
  border-collapse: separate;
  border-spacing: 0;
  table-layout: fixed;
}

.c-indent {
  width: 33px;
}

.c-date {
  width: 90px;
}

.c-time, .c-people {
  width: 50px;
}

.viewport th {
  height: 33px;
  padding: 0;
  border: 1px solid #b8b8b8;
  border-width: 0 1px 1px 0;
  background: #f5f5f5;
  font-size: 15px;
  font-weight: 400;
}

.viewport .band {
  height: 34px;
}

.sorted div {
  display: flex;
  align-items: center;
  padding: 0 10px 0 32px;
}

.sorted i {
  margin-left: auto;
  border: 6px solid transparent;
  border-top: 0;
  border-bottom: 6px solid #666;
}

.viewport tbody tr {
  height: 20px;
  background: #dcfbe2;
  color: #848484;
}

.viewport tbody tr:nth-child(odd) {
  background: #d9f0fe;
}

.viewport td {
  padding: 1px 0 0;
  font-size: 14px;
  line-height: 16px;
  vertical-align: top;
  white-space: pre-line;
}

.viewport .record {
  padding-left: 1px;
  font-family: Roboto, "Noto Sans", sans-serif;
}

.viewport tbody .day {
  height: 34px;
  color: #fff;
}

.viewport tbody .today {
  color: #00e4f4;
}

.day .fill {
  background: #007fc4;
}

.viewport .toggle {
  padding: 0 0 0 8px;
  vertical-align: middle;
}

.viewport tbody .lines2 {
  height: 40px;
}

.viewport tbody .lines3 {
  height: 60px;
}

.viewport .kind {
  padding: 0 0 0 74px;
  vertical-align: middle;
}

.kind svg {
  width: 20px;
  height: 20px;
}

.viewport tbody .booked {
  color: #000;
}

.viewport tbody .debt {
  color: #d00000;
}

.booked td:not(.kind) {
  background: #fffdb5;
}

.vscroll, .hscroll {
  display: flex;
  align-items: center;
}

.vscroll {
  flex-direction: column;
  padding: 9px 0;
}

.hscroll {
  padding: 0 9px;
}

.vscroll i, .hscroll i {
  border: 4px solid transparent;
}

.vscroll .up {
  border-top: 0;
  border-bottom-color: #888;
}

.vscroll .down {
  border-bottom: 0;
  border-top-color: #888;
}

.hscroll .prev {
  border-left: 0;
  border-right-color: #888;
}

.hscroll .next {
  border-right: 0;
  border-left-color: #888;
}

.track {
  flex: 1;
}

.vscroll .track {
  margin: 8px 0;
}

.hscroll .track {
  margin: 0 8px;
}

.thumb {
  width: 10px;
  background: #b8b8b8;
}

.hscroll .thumb {
  width: 90%;
  height: 10px;
}

/* document tabs and status bar */
.tabstrip {
  flex: none;
  height: 57px;
  margin: 0 21px;
  background: linear-gradient(#b8b8b8 1px, #fff 1px 3px, #b8b8b8 3px 4px, #fff 4px);
}

.tab {
  display: flex;
  align-items: center;
  width: 147px;
  height: 57px;
  padding-left: 16px;
  border: 1px solid #b8b8b8;
  border-bottom: 2px solid #12a4f8;
  background: #fff;
  color: #129af5;
  font-size: 15px;
}

.tab > svg {
  width: 32px;
  height: 28px;
}

.tab a {
  margin: 0 18px 0 12px;
  color: inherit;
  text-decoration: none;
}

.tab button svg {
  width: 12px;
  height: 12px;
}

.statusbar {
  display: flex;
  align-items: center;
  flex: none;
  height: 45px;
  padding: 0 22px 20px 21px;
}

.cell {
  display: flex;
  align-items: center;
  flex: none;
  height: 20px;
  padding-left: 12px;
  border-right: 1px solid #b4b4b4;
  white-space: nowrap;
}

.cell svg {
  width: 20px;
  height: 20px;
  margin-right: 20px;
}

.cell text {
  fill: #333f66;
  font-size: 11px;
  font-weight: 700;
}

.cell.version {
  width: 225px;
  padding-left: 7px;
}

.cell.host {
  width: 170px;
}

.cell.user {
  width: 179px;
}

.cell.date {
  width: 149px;
}

.cell.timer {
  width: 149px;
  padding-left: 35px;
}

.cell.time {
  flex: 1;
  padding-left: 13px;
}

.resize {
  align-self: flex-end;
  width: 14px;
  height: 14px;
  margin-left: 14px;
}
</style>
